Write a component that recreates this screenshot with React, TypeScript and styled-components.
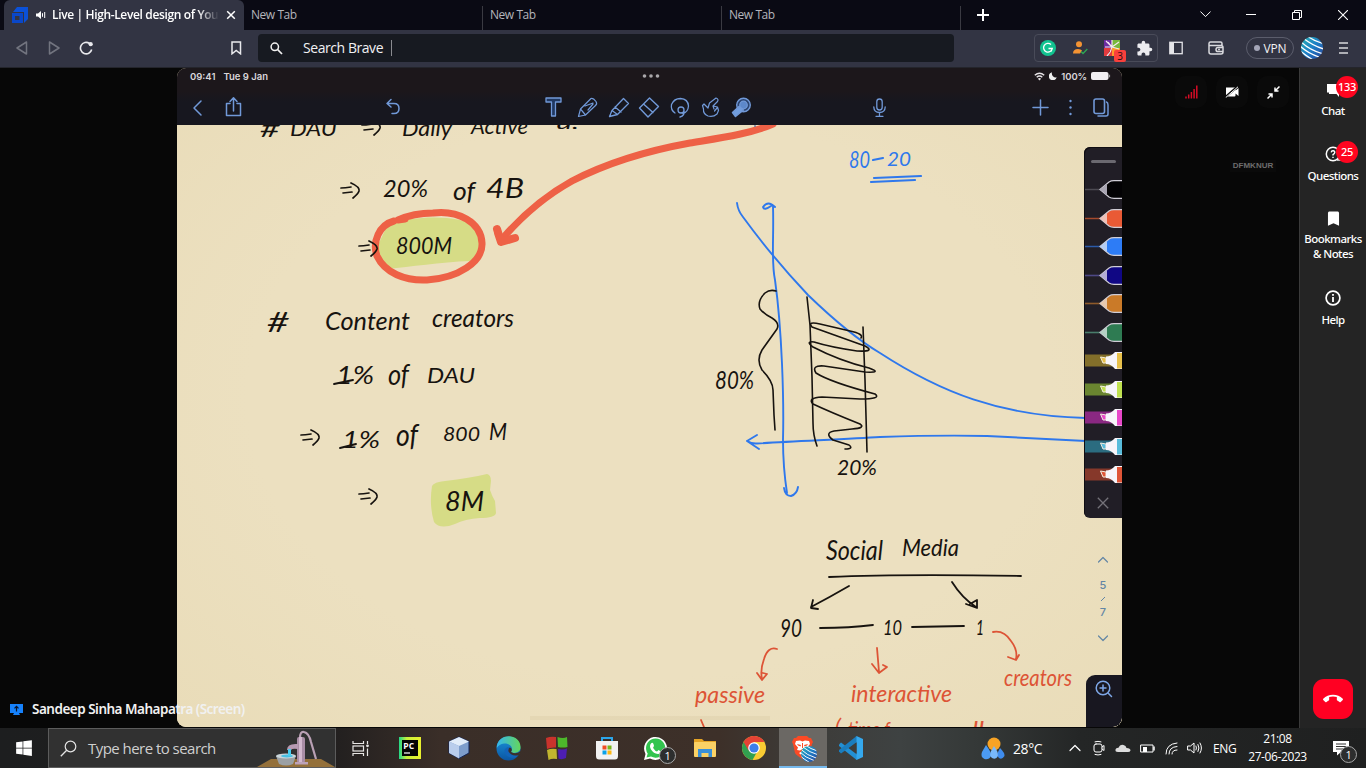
import React from 'react';
import styled, { createGlobalStyle } from 'styled-components';
import { FaWindows } from 'react-icons/fa';
import { MdExtension, MdCallEnd, MdBookmark } from 'react-icons/md';

const Global = createGlobalStyle`
  * { box-sizing: border-box; }
  html, body { margin: 0; padding: 0; background: #070707; overflow: hidden; }
  svg { display: block; flex: none; }
`;

const ui = '"Open Sans", "Noto Sans", sans-serif';

const Screen = styled.div`
  width: 1366px; height: 768px; display: flex; flex-direction: column;
  overflow: hidden; font-family: ${ui}; color: #fff; background: #070707;
`;

/* ---------- browser chrome ---------- */
const TabStrip = styled.div`
  height: 30px; flex: none; display: flex; align-items: stretch; background: #0a0a14; padding-left: 4px;
`;
const ActiveTab = styled.div`
  width: 240px; flex: none; display: flex; align-items: center; background: #323443;
  border-radius: 6px 6px 0 0; padding-left: 8px;
`;
const Favicon = styled.svg`width: 17px; height: 17px;`;
const Speaker = styled.svg`width: 10px; height: 10px; margin-left: 7px;`;
const CloseTab = styled.svg`width: 10px; height: 10px; margin-left: 6px;`;
const ActiveTitle = styled.span`
  flex: none; width: 168px; margin-left: 6px; overflow: hidden; white-space: nowrap; font-size: 12px; font-weight: 600;
  letter-spacing: -0.36px; line-height: 18px;
  mask-image: linear-gradient(90deg, #000 146px, transparent 167px);
`;
const IdleTab = styled.div<{ $w: number }>`
  width: ${p => p.$w}px; flex: none; padding-left: 7px; font-size: 12px; letter-spacing: -0.45px; line-height: 30px; color: #b4b5bb;
  border-right: 1px solid #3a3a42; border-image: linear-gradient(#0a0a14 7px, #3a3a42 7px) 1;
`;
const NewTabBtn = styled.div`width: 44px; display: flex; align-items: center; justify-content: center;`;
const WinButtons = styled.div`margin-left: auto; display: flex; align-items: center; height: 29px;`;
const WinBtn = styled.div`width: 46px; display: flex; justify-content: center;`;

const Toolbar = styled.div`
  height: 37px; flex: none; display: flex; align-items: center; background: #323443; padding-bottom: 1px;
`;
const NavIcons = styled.div`display: flex; align-items: center; width: 258px; padding-left: 15px; gap: 18px;`;
const BookmarkIcon = styled.svg`width: 11px; height: 14px; margin-left: 120px;`;
const Address = styled.div`
  width: 696px; height: 28px; flex: none; display: flex; align-items: center; background: #171a21; border-radius: 4px;
  padding-left: 12px; font-size: 14px; letter-spacing: -0.44px; color: #f1f1f3;
`;
const AddressText = styled.span`margin-left: 20px; padding-right: 8px; border-right: 1px solid #8a8b90; line-height: 16px;`;
const ExtGroup = styled.div`
  margin-left: 80px; width: 124px; height: 28px; border: 1px solid #494b59; border-radius: 4px; display: flex; align-items: center;
  padding-left: 5px; gap: 16px; flex: none;
`;
const RelBox = styled.div`position: relative; display: flex;`;
const ExtBadge = styled.span`
  position: absolute; left: 10px; top: 10px; width: 12px; height: 12px; border-radius: 2px; background: #f8403c; color: #2a0d10;
  font-size: 10px; line-height: 12px; text-align: center;
`;
const PanelIcon = styled.svg`width: 14px; height: 14px; margin-left: 11px;`;
const WalletIcon = styled.svg`width: 16px; height: 14px; margin-left: 25px;`;
const Vpn = styled.div`
  width: 48px; height: 22px; border: 1px solid #5b5d6c; border-radius: 11px; display: flex; align-items: center; justify-content: center;
  gap: 4px; font-size: 12px; letter-spacing: -0.2px; color: #f3f3f5; margin-left: 22px; margin-right: 7px;
`;
const MenuIcon = styled.svg`width: 10px; height: 12px; margin-left: 16px;`;
const Dot = styled.i`width: 6px; height: 6px; border-radius: 50%; background: #a4a6b8;`;

/* ---------- meeting ---------- */
const Meeting = styled.div`height: 661px; flex: none; display: flex; background: #070707; position: relative; border-top: 1px solid #24252c;`;
const Gutter = styled.div`width: 177px; flex: none;`;
const Board = styled.div`
  width: 945px; height: 659px; flex: none; display: flex; flex-direction: column; border-radius: 9px; overflow: hidden; background: #ebdfbd;
`;
const BoardHead = styled.div`
  height: 57px; flex: none; background: linear-gradient(#1c171b 0 40%, #17171f 60%); color: #ddd; display: flex; flex-direction: column;
`;
const StatusRow = styled.div`
  display: flex; align-items: center; height: 16px; padding: 0 11px 0 13px; font: 600 9.5px Inter, sans-serif; color: #d9d6da;
`;
const StatusLeft = styled.div`flex: 1; display: flex; gap: 8px;`;
const StatusRight = styled.div`flex: 1; display: flex; gap: 4px; align-items: center; justify-content: flex-end; letter-spacing: -0.1px;`;
const ToolRow = styled.div`flex: 1; padding: 11px 0 0;`;
const Paper = styled.div`
  flex: 1; position: relative;
  background: radial-gradient(ellipse at 50% 45%, #eee2c200 60%, #e3d4a955 100%), #ece0c0;
`;
const PenTray = styled.div`
  position: absolute; right: 0; top: 22px; width: 38px; height: 371px; border-radius: 6px 0 0 6px; background: #211e26;
  box-shadow: inset 1px 1px 0 #0f0d12; display: flex; flex-direction: column; align-items: flex-end; overflow: hidden;
`;
const Grip = styled.div`width: 25px; height: 3px; border-radius: 2px; background: #6b6970; margin: 13px 6px 12px 0;`;
const TrayClose = styled.div`flex: 1; width: 38px; display: flex; align-items: center; justify-content: center;`;
const Pager = styled.div`
  position: absolute; right: 9px; top: 430px; width: 20px; height: 88px; display: flex; flex-direction: column; align-items: center;
  justify-content: space-between; font: 500 11px/13px Inter, sans-serif; color: #6386a5;
`;
const PageNums = styled.div`display: flex; flex-direction: column; align-items: center;`;
const ZoomBox = styled.div`
  position: absolute; right: 0; bottom: 0; width: 36px; height: 52px; border-radius: 9px 0 9px 0; background: #181720;
  display: flex; justify-content: center; padding-top: 5px;
`;
const Presenter = styled.div`
  position: absolute; left: 10px; bottom: 9px; display: flex; align-items: center; gap: 9px; font: 600 13.5px/20px "Noto Sans", sans-serif;
  letter-spacing: -0.5px; color: #f1f1f1; white-space: nowrap;
`;
const SidePane = styled.div`flex: 1; display: flex; flex-direction: column; align-items: stretch; padding-top: 8px;`;
const RoundRow = styled.div`display: flex; justify-content: flex-end; gap: 9px; padding-right: 10px;`;
const RoundBtn = styled.div`width: 32px; height: 32px; border-radius: 10px; background: #0a0a0a; display: flex; align-items: center; justify-content: center;`;
const Code = styled.div`
  margin: 52px 0 0 108px; width: 46px; font: 700 8px/12px "Liberation Sans", sans-serif; color: #6d6d6d; text-align: center; background: #0a0a0a;
`;
const Rail = styled.div`
  width: 67px; flex: none; background: #242424; border-left: 1px solid #3a3a3a; display: flex; flex-direction: column; align-items: center;
`;
const RailItem = styled.div<{ $h: number; $top: number; $gap: number }>`
  height: ${p => p.$h}px; padding-top: ${p => p.$top}px; gap: ${p => p.$gap}px; flex: none; display: flex; flex-direction: column;
  align-items: center; position: relative; font: 500 11.5px/15px "Noto Sans", sans-serif; letter-spacing: -0.55px; text-align: center; white-space: pre-line;
`;
const Count = styled.span`
  position: absolute; top: 8px; left: 50%; margin-left: 3px; width: 22px; height: 22px; border-radius: 50%; background: #ff0520;
  font-size: 11px; line-height: 21px; text-align: center; letter-spacing: -0.3px;
`;
const EndCall = styled.div`
  margin-top: auto; margin-bottom: 9px; width: 40px; height: 40px; border-radius: 11px; background: #ff0022; display: flex; align-items: center; justify-content: center;
`;

/* ---------- taskbar ---------- */
const Taskbar = styled.div`
  height: 40px; flex: none; display: flex; align-items: stretch;
  background: linear-gradient(90deg, #1d1e1f 0, #211f1f 330px, #3a2e28 440px, #3d3029 720px, #3d3b38 800px, #3e4242 900px, #343837 980px, #242626 1080px, #1f2020 1366px);
`;
const Start = styled.div`width: 48px; display: flex; align-items: center; justify-content: center;`;
const SearchBox = styled.div`
  width: 288px; height: 40px; background: #313131; border: 1px solid #5c5c5c; display: flex; align-items: center; padding-left: 11px;
  font-size: 15px; letter-spacing: -0.54px; color: #cfcfcf; overflow: hidden;
`;
const SearchText = styled.span`margin-left: 11px; width: 170px;`;
const Apps = styled.div`display: flex;`;
const AppSlot = styled.div<{ $on?: boolean }>`
  width: ${p => (p.$on ? 48 : 49.2)}px; display: flex; align-items: center; justify-content: center; position: relative;
  background: ${p => (p.$on ? '#6b6864' : 'transparent')};
  border-bottom: ${p => (p.$on ? '2px solid #76b9ed' : '0')};
`;
const ProfileBadge = styled.div`position: absolute; left: 22px; top: 18px;`;
const Num = styled.span<{ $x: number; $y: number }>`
  position: absolute; left: ${p => p.$x}px; top: ${p => p.$y}px; width: 17px; height: 17px; border-radius: 50%; border: 1px solid #a7a7a7;
  background: #2d2e2e; font-size: 11px; line-height: 15px; text-align: center;
`;
const Tray = styled.div`margin-left: auto; display: flex; align-items: center; font-size: 12px; letter-spacing: -0.4px;`;
const Weather = styled.div`display: flex; align-items: center; gap: 7px; font-size: 14px; width: 87px;`;
const TrayIcons = styled.div`display: flex; align-items: center; gap: 8px;`;
const Lang = styled.span`margin-left: 10px; width: 26px;`;
const Clock = styled.div`width: 77px; text-align: center; line-height: 18px;`;
const Notif = styled.div`position: relative; width: 50px; display: flex; justify-content: center; height: 40px; align-items: center;`;

const line = { fill: 'none', stroke: 'currentColor', strokeLinecap: 'round', strokeLinejoin: 'round' } as const;

const Written = styled.text`font-family: Lato, "Noto Sans", sans-serif; font-style: italic; font-weight: 400;`;

type Word = [string, number, number, number, number, string?];
const INK = '#17130f';
const BLUE = '#2f78ec';
const RED = '#dd5436';
const words: Word[] = [
  ['#', 260, 137, 20, 24], ['DAU', 290, 136, 47, 22], ['Daily', 402, 136, 50, 22], ['Active', 471, 134, 57, 21], ['u.', 556, 129, 23, 18],
  ['20%', 383, 197, 45, 23], ['of', 453, 200, 22, 26], ['4B', 486, 198, 38, 27],
  ['800M', 396, 254, 56, 24],
  ['#', 267, 332, 22, 27], ['Content', 325, 330, 85, 26], ['creators', 432, 327, 82, 25],
  ['1%', 336, 384, 38, 25], ['of', 388, 385, 21, 29], ['DAU', 427, 383, 48, 22],
  ['1%', 342, 448, 38, 24], ['of', 396, 446, 22, 30], ['800', 443, 441, 37, 20], ['M', 489, 440, 18, 23],
  ['8M', 445, 511, 39, 27],
  ['80', 849, 168, 21, 24, BLUE], ['20', 887, 166, 24, 19, BLUE],
  ['80%', 715, 389, 39, 26], ['20%', 837, 475, 40, 22],
  ['Social', 826, 560, 57, 27], ['Media', 902, 556, 57, 24],
  ['90', 780, 637, 22, 25], ['10', 883, 635, 19, 21], ['1', 976, 635, 8, 21],
  ['passive', 695, 703, 70, 24, RED], ['interactive', 851, 702, 101, 23, RED], ['creators', 1004, 686, 68, 24, RED],
  ['(', 835, 734, 6, 22, RED], ['time f', 848, 737, 42, 22, RED], ['ll', 972, 737, 12, 22, RED],
];

const Implies = ({ x, y }: { x: number; y: number }) => (
  <path d={`M${x} ${y - 2} q4 0 10 -1 M${x + 2} ${y + 3} l9 -1 M${x + 10} ${y - 7} q9 4 8 8 q-1 3 -6 7`} {...line} stroke={INK} strokeWidth={1.7} />
);

const Notes = () => (
  <svg width="945" height="602" viewBox="177 125 945 602">
    <path d="M388 224 C420 214 462 216 475 226 L482 243 Q480 258 470 261 C440 262 410 267 388 269 Q378 262 378 245Z" fill="#d6dc86" />
    <path d="M432 486 Q434 482 445 481 Q470 478 487 474 Q491 475 491 481 L490 490 Q492 496 495 501 L496 513 Q495 518 480 518 Q465 519 455 524 Q440 530 434 522 Q429 505 432 486Z" fill="#d6dc86" />
    <path d="M530 718 H770" stroke="#ddcfaa" strokeWidth="4" opacity=".45" />
    <g {...line} stroke="#ee6146" strokeWidth="7">
      <path d="M394 221 C379 225 372 242 377 256 C385 273 405 281 427 280 C458 278 483 262 482 243 C481 222 458 210 433 213 C418 213 407 216 398 220 L405 219" />
      <path d="M773 124 C750 134 720 138 690 143 C640 152 605 164 572 181 C545 196 522 216 503 238" />
      <path d="M497 229 L501 242 L515 238 M498 233 L501 242" strokeWidth="8" />
    </g>
    <g {...line} stroke={BLUE} strokeWidth="1.9">
      <path d="M737 203 Q738 211 743 217 Q773 258 808 295 C838 324 858 340 880 353 C940 392 1000 416 1086 418" />
      <path d="M773 206 C774 240 771 262 775 280 C782 330 784 400 783 440 C783 465 785 480 787 493 M784 488 Q785 496 791 496 Q797 494 798 487 M775 207 Q768 200 763 207 Q764 211 771 206" />
      <path d="M747 441 Q752 444 757 443.500 C800 441 850 439 880 437 Q940 435 987 436 L1086 441 M757 435 L747 441 L759 449" />
      <path d="M871 182 L915 180 M874 178 L921 176 M873 160 L883 158" strokeWidth="2.2" />
    </g>
    <g {...line} stroke={INK} strokeWidth="1.6">
      <path d="M776 291 Q770 289 765 293 Q757 301 760 309 Q764 314 772 318 Q780 323 777 329 L762 350 Q756 360 762 370 Q773 381 773 390 L774 415 L775 430" />
      <path d="M807 297 L810 325 L812 377 L813 423 Q813 435 817 446 M863 327 L865 380 L867 452" />
      <path d="M861 338 Q864 334 850 331 L820 324 Q807 321 812 327 L865 346 Q876 352 857 351 Q830 347 814 342 Q805 341 813 347 Q840 361 869 368 Q883 373 865 372 L824 366 Q811 365 816 373 Q830 382 875 394 Q882 399 860 399 L822 397 Q807 398 813 404 Q830 412 860 424 Q866 428 852 429 L834 431 Q824 433 833 440 L849 445 Q854 449 845 449" />
      <path d="M829 577 Q900 574 1021 576 M849 586 Q830 597 811 607 M813 600 L811 608 L818 609 M952 582 Q962 598 976 607 M966 604 L977 608 L977 600 L970 604 M820 628 Q850 628 873 625 M912 627 L964 626" strokeWidth="1.8" />
      <path d="M334 384 L353 380 M340 448 L356 444" strokeWidth="1.900" />
    </g>
    <g {...line} stroke={RED} strokeWidth="1.8">
      <path d="M777 649 Q768 646 764 659 Q760 670 762 679 M757 673 L762 680 L767 674 L763 673 M877 648 L879 672 M872 664 L879 673 L887 667 L883 665 M993 632 Q1004 630 1011 641 Q1018 650 1016 659 M1008 657 L1016 660 L1019 655 M701 720 L704 727" />
    </g>
    <path d="M755 125 V127" stroke="#36529a" strokeWidth="1" />
    <Implies x={362} y={127} /><Implies x={341} y={190} /><Implies x={359} y={248} />
    <Implies x={301} y={437} /><Implies x={359} y={496} />
    {words.map(([t, x, y, w, size, color], i) => (
      <Written key={i} x={x} y={y} textLength={w} lengthAdjust="spacingAndGlyphs" fontSize={size} fill={color || INK}>{t}</Written>
    ))}
  </svg>
);

const Pen = ({ c, tip, ln }: { c: string; tip: string; ln: string }) => (
  <svg width="38" height="28.5" viewBox="0 0 38 28.5">
    <path d="M1 14.500H17" stroke={ln} strokeWidth="1.6" />
    <path d="M16 14.500 L25 7 Q27 5.700 30 5.700 H40 V23.300 H30 Q27 23.300 25 22Z" fill={c} stroke="#d0cdd6" strokeWidth="1.2" />
    <path d="M16 14.500 L23 8.700 V20.300Z" fill={tip} />
  </svg>
);
const Marker = ({ c, band }: { c: string; band: string }) => (
  <svg width="38" height="28.5" viewBox="0 0 38 28.5">
    <rect x="1" y="8.500" width="37" height="12" fill={band} />
    <path d="M16.500 11 L22 12 V17 H19 Z" fill={c} stroke="#f4eedf" strokeWidth="1" />
    <path d="M22 10.500 Q27 10.500 31 6 H38 V23 H31 Q27 18 22 18Z" fill="#f7f5fa" />
    <rect x="33" y="7" width="5" height="15.500" fill={c} />
  </svg>
);

const ToolsSvg = styled.svg`color: #7199d8;`;
const BoardTools = () => (
  <ToolsSvg width="945" height="30" viewBox="177 95 945 30">
    <g {...line} strokeWidth="1.5">
      <path d="M201 101 L194 108 L201 115" />
      <path d="M230 103.500 H226.500 V115.500 H240.500 V103.500 H237 M233.500 111 V98 M230 101.500 L233.500 97.700 L237 101.500" />
      <path d="M391 99.500 L387 103.500 L391 107 M387 103.500 H394 Q399 103.500 399 108.500 Q399 113.500 394 113.500 H392" />
      <path d="M546 98 H561 V102 H555.500 V116 H551.500 V102 H546Z" fill="#203861" strokeWidth="1.300" />
      <path d="M578.500 116.500 L580.500 109 L591 98.500 Q593 97.500 596 101.500 Q597.500 104 595.500 105.500 L585.500 115Z M580.500 109 L585.500 115 M585 106 L593 103 M588 110 L593 104" strokeWidth="1.200" />
      <path d="M609.500 116.500 L612 110.500 L623.500 98.500 L628.500 103.500 L617.500 114.500Z M612 110.500 L617.500 114.500 M615 107 L621 112" strokeWidth="1.300" />
      <path d="M639.500 108 L649.500 98 L658.500 106.500 L648 117Z M643.500 104 L653 112.500" strokeWidth="1.400" />
      <path d="M675 113 Q670.500 110 671.500 104.500 Q674 98.500 680.500 98.500 Q688 99 688.500 106 Q688 112 683 113.500 M684 110 A3 3 0 1 0 678 110 A3 3 0 1 0 684 110 Q685 116 680 117" strokeWidth="1.300" />
      <path d="M704 104 L708 108 L709.500 103 L716 98 Q719 99 717.500 101.500 L713 106 L717.500 107 L718.500 110.500 L717 114 Q713 117.500 708 116 Q703 114 703.500 109 L702.500 105.500Z M713 106 L714 109 M717 108 L714.500 111" strokeWidth="1.200" />
      <circle cx="743.500" cy="105" r="6.800" fill="#2b4470" strokeWidth="1.400" /><circle cx="743.500" cy="105" r="3.800" fill="#5d88ca" strokeWidth="1.200" />
      <path d="M732.500 112.500 L739 106.500 L743.500 110 L735.500 116.500Z" fill="#719dde" />
      <rect x="876.800" y="99" width="5.400" height="11" rx="2.700" strokeWidth="1.300" /><path d="M873.800 107 Q874 112.500 879.500 112.500 Q885 112.500 885.200 107 M879.500 112.500 V116 M876 116.300 H883" strokeWidth="1.300" />
      <path d="M1033 107.500 H1048 M1040.500 100 V115" />
      <rect x="1094" y="99" width="10.500" height="14.500" rx="2" strokeWidth="1.600" /><path d="M1106.500 102 Q1108 102.500 1108 105 V114 Q1108 116 1106 116 H1098" strokeWidth="1.500" />
    </g>
    <g fill="currentColor"><circle cx="1070.500" cy="101" r="1.200" /><circle cx="1070.500" cy="107.500" r="1.200" /><circle cx="1070.500" cy="114" r="1.200" /></g>
  </ToolsSvg>
);

const Globe = ({ s }: { s: number }) => (
  <svg width={s} height={s} viewBox="0 0 22 22">
    <defs>
      <linearGradient id="gl" x1="0" y1="0" x2="1" y2="1"><stop offset="0" stopColor="#29b3b3" /><stop offset=".5" stopColor="#1d7fc6" /><stop offset="1" stopColor="#2a449c" /></linearGradient>
      <clipPath id="gc"><circle cx="11" cy="11" r="11" /></clipPath>
    </defs>
    <circle cx="11" cy="11" r="11" fill="url(#gl)" />
    <g clipPath="url(#gc)" stroke="#fff" strokeWidth="1.300" fill="none">
      <path d="M6 -1 Q13 4 23 7 M2 1 Q12 9 23 12 M-1 4 Q8 13 22 17 M-2 8 Q6 16 18 20 M-2 13 Q4 18 12 23" />
    </g>
  </svg>
);

const Pump = () => (
  <svg width="78" height="38" viewBox="0 0 78 38">
    <path d="M0 38 L14 30 H64 L78 38Z" fill="#94703a" />
    <path d="M43 9 Q43 2 47 3 Q52 4 54 13 L59 30" fill="none" stroke="#b9a0b4" strokeWidth="2.200" />
    <rect x="40" y="8" width="8" height="26" rx="2" fill="#a98da5" /><rect x="42" y="8" width="3" height="26" fill="#d2b8cd" />
    <path d="M41 15 Q30 14 30 21 H34 Q35 19 41 20Z" fill="#b79ab2" /><path d="M38 33 H51 V35.500 H38Z" fill="#bda2b8" />
    <path d="M19 27 H39 L36 35 Q29 38 22 35Z" fill="#9ba0a4" /><ellipse cx="29" cy="27" rx="10" ry="2.500" fill="#c9d5db" /><ellipse cx="30" cy="27" rx="6" ry="1.500" fill="#49bfe2" />
    <rect x="31" y="20" width="3" height="7" fill="#47cdf0" />
  </svg>
);

const apps: React.ReactNode[] = [
  <svg width="17" height="17" viewBox="0 0 17 17" fill="none" stroke="#e8e6e4" strokeWidth="1.200"><path d="M1 1 V3.500 H11.500 V1 M1 16 V13.500 H11.500 V16" /><rect x="1" y="6" width="10.500" height="5" /><path d="M15.500 1 V4 M15.500 8.500 V16" /><circle cx="15.500" cy="5.800" r=".8" fill="#fff" /></svg>,
  <svg width="22" height="22" viewBox="0 0 22 22"><defs><linearGradient id="pc"><stop offset="0" stopColor="#21d789" /><stop offset=".35" stopColor="#c7f03a" /><stop offset="1" stopColor="#e9f02f" /></linearGradient></defs><rect width="22" height="22" fill="url(#pc)" /><rect x="3" y="3" width="16" height="16" fill="#050505" /><text x="4.300" y="11.500" fontSize="8.500" fontWeight="700" fill="#fff" fontFamily="Open Sans" letterSpacing="0">PC</text><path d="M5 16 H11" stroke="#fff" strokeWidth="1.200" /></svg>,
  <svg width="22" height="24" viewBox="0 0 22 24"><path d="M11 1 L21 5.500 V17 L11 22.500 L1 17 V5.500Z" fill="#7d9dcc" stroke="#122355" /><path d="M11 1 L21 5.500 L11 10 L1 5.500Z" fill="#e1ecf9" /><path d="M1 5.500 L11 10 V22.500 L1 17Z" fill="#b9cdec" /></svg>,
  <svg width="25" height="25" viewBox="0 0 25 25"><defs><linearGradient id="e1" x1="0" x2="1"><stop offset="0" stopColor="#34b5ef" /><stop offset="1" stopColor="#64d65b" /></linearGradient><linearGradient id="e2" y2="1" x2="0"><stop offset="0" stopColor="#1a94da" /><stop offset="1" stopColor="#0b55a3" /></linearGradient></defs><circle cx="12.500" cy="12.500" r="12" fill="url(#e2)" /><path d="M.8 10 C3 -3 24 -3 24.500 11 C25 17 18 18 15 16 C18 12 14 7 8 7.500 Q3 8 .8 12Z" fill="url(#e1)" /><path d="M12 11 C5 13 9 23 19 21.500 Q22 20 23.500 17 Q17 20 14.500 16 Q13 14 14 12Z" fill="#1264ba" /><path d="M15 16 Q20 19 24.800 15 L23 19 Q16 21 12.500 15.500Q12 12 14 11.500Q17 13 15 16" fill="#3c302a" /></svg>,
  <svg width="22" height="24" viewBox="0 0 22 24"><path d="M0 2 Q5 0 10 1 V11.500 Q5 11 1 13Z" fill="#c9332c" /><path d="M11.500 1 Q17 3 21 1 L21.500 11 Q17 12 12 11Z" fill="#4db72b" /><path d="M1 14 Q5 12 10.500 13 L11 23 Q6 22 2.500 24Z" fill="#c1b52f" /><path d="M12 13 Q17 14 21 12.500 L20 22 Q16 24 12.500 22.500Z" fill="#4d1eb1" /></svg>,
  <svg width="24" height="24" viewBox="0 0 24 24"><path d="M7 6 V2 H17 V6" fill="none" stroke="#2ba6ea" strokeWidth="2" /><path d="M1 5 H23 V20 Q23 23.500 20 23.500 H4 Q1 23.500 1 20Z" fill="#f2f2f2" /><path d="M7.500 9.500h4v4h-4z" fill="#ef4c25" /><path d="M12.500 9.500h4v4h-4z" fill="#78b61c" /><path d="M7.500 14.500h4v4h-4z" fill="#0ba2e8" /><path d="M12.500 14.500h4v4h-4z" fill="#fcb713" /></svg>,
  <><svg width="25" height="25" viewBox="0 0 25 25"><path d="M1 24 L2.500 18 A11.500 11.500 0 1 1 7 22.500Z" fill="#fff" /><path d="M3.500 21.500 L4.700 17.500 A9.600 9.600 0 1 1 8 20.500Z" fill="#32c44f" /><path d="M8 7.500 Q9.500 6 10.500 8 L11 10 Q9.500 11.500 10.500 12.500 Q12 15 14 15.500 L15.500 14 L18 15.500 Q18 18 15 18 Q10.500 17.500 8 13.500 Q6 10 8 7.500Z" fill="#fff" /></svg><Num $x={28} $y={19}>1</Num></>,
  <svg width="22" height="20" viewBox="0 0 22 20"><path d="M0 1 H8 L10 3 H22 V18 H0Z" fill="#e5a425" /><rect y="4" width="22" height="15" rx="1" fill="#fad165" /><path d="M4 19 V11 H18 V19 H14.500 V15 H7.500 V19Z" fill="#3990d8" /></svg>,
  <svg width="24" height="24" viewBox="0 0 24 24"><circle cx="12" cy="12" r="12" fill="#f9cb33" /><path d="M12 12 L1.600 6 A12 12 0 0 0 10.500 23.900 L15.500 15Z" fill="#31a050" /><path d="M1.600 6 A12 12 0 0 1 22.400 6 H12 L6.500 14.500Z" fill="#e54335" /><circle cx="12" cy="12" r="5.800" fill="#fff" /><circle cx="12" cy="12" r="4.600" fill="#3d7eea" /></svg>,
];

const Lion = () => (
  <svg width="21" height="24" viewBox="0 0 21 24">
    <path d="M6 1 H15 L17 3 L19 3 L21 7 L20 9 L18 18 Q17 20 10.500 24 Q4 20 3 18 L1 9 L0 7 L2 3 H4Z" fill="#fb4a25" />
    <path d="M4 6 L8 5.500 L10.500 6.500 L13 5.500 L17 6 L18 9 L15 12.500 L16 15 L13 15.500 L10.500 14 L8 15.500 L5 15 L6 12.500 L3 9Z M7 18 L10.500 16 L14 18 L10.500 21Z" fill="#fff" />
    <path d="M5 9 L9 10 L8.500 11.500 L6 10.500Z M16 9 L12 10 L12.500 11.500 L15 10.500Z M10 8 H11 V13 H10Z" fill="#fb4a25" />
  </svg>
);

const VSCode = () => (
  <svg width="24" height="24" viewBox="0 0 24 24">
    <path d="M0 8.500 L2 6.500 L18 18.500 V24 L17 23.500 L0 10Z" fill="#2390d4" />
    <path d="M0 15.500 L2 17.500 L18 6 V0 L17 .5 L0 14Z" fill="#1a7dbe" />
    <path d="M17.500 0 L24 3 V21 L17.500 24Z" fill="#35a8ed" />
    <path d="M17.500 6.500 L10.300 12 L17.500 17.500Z" fill="#3c3d3b" />
  </svg>
);

export default function App() {
  return (
    <Screen>
      <Global />
      <TabStrip>
        <ActiveTab>
          <Favicon viewBox="0 0 17 17"><path d="M5 0 H16 V12 L12 16 V5 H1Z" fill="#0b51d8" /><path d="M0 6 H11 V16 H0Z M3 9 V13 H7.500 V9Z" fill="#0a47c9" fillRule="evenodd" /></Favicon>
          <Speaker viewBox="0 0 10 10"><path d="M0 3.500 H2 L5 1 V9 L2 6.500 H0Z" fill="#fff" /><path d="M6.500 3.200 V6.800 M8.700 2 V8" stroke="#fff" strokeWidth="1" /></Speaker>
          <ActiveTitle>Live | High-Level design of YouTube</ActiveTitle>
          <CloseTab viewBox="0 0 10 10"><path d="M1.200 1.200 L8.800 8.800 M8.800 1.200 L1.200 8.800" stroke="#fff" strokeWidth="1.500" /></CloseTab>
        </ActiveTab>
        <IdleTab $w={239}>New Tab</IdleTab>
        <IdleTab $w={239}>New Tab</IdleTab>
        <IdleTab $w={239}>New Tab</IdleTab>
        <NewTabBtn><svg width="12" height="12" viewBox="0 0 12 12"><path d="M6 0 V12 M0 6 H12" stroke="#fff" strokeWidth="2" /></svg></NewTabBtn>
        <WinButtons>
          <WinBtn><svg width="11" height="7" viewBox="0 0 11 7"><path d="M.7 .8 L5.500 5.600 L10.300 .8" {...line} strokeWidth="1" /></svg></WinBtn>
          <WinBtn><svg width="10" height="1"><rect width="10" height="1" fill="#fff" /></svg></WinBtn>
          <WinBtn><svg width="10" height="10" viewBox="0 0 10 10" fill="none" stroke="#fff"><path d="M.5 2.500 H7.500 V9.500 H.5Z M2.500 2.500 V.5 H9.500 V7.500 H7.500" /></svg></WinBtn>
          <WinBtn><svg width="10" height="10" viewBox="0 0 10 10"><path d="M0 0 L10 10 M10 0 L0 10" stroke="#fff" strokeWidth="1.100" /></svg></WinBtn>
        </WinButtons>
      </TabStrip>
      <Toolbar>
        <NavIcons>
          <svg width="14" height="14" viewBox="0 0 14 14"><path d="M11.500 1 V13 L2 7Z" fill="none" stroke="#72747f" strokeWidth="1.500" strokeLinejoin="round" /></svg>
          <svg width="14" height="14" viewBox="0 0 14 14"><path d="M2.500 1 V13 L12 7Z" fill="none" stroke="#72747f" strokeWidth="1.500" strokeLinejoin="round" /></svg>
          <svg width="14" height="14" viewBox="0 0 14 14"><path d="M10.500 2.500 A5.700 5.700 0 1 0 12.700 8.500" fill="none" stroke="#e9e9ed" strokeWidth="1.600" /><circle cx="11.700" cy="3.200" r="2.100" fill="#e9e9ed" /></svg>
          <BookmarkIcon viewBox="0 0 11 14"><path d="M1 1 H9.500 V12.800 L5.200 9.500 L1 12.800Z" fill="none" stroke="#e9e9ed" strokeWidth="1.500" /></BookmarkIcon>
        </NavIcons>
        <Address>
          <svg width="13" height="13" viewBox="0 0 13 13"><circle cx="4.800" cy="4.800" r="3.700" fill="none" stroke="#f1f1f1" strokeWidth="1.500" /><path d="M7.700 7.700 L12 12" stroke="#f1f1f1" strokeWidth="1.700" /></svg>
          <AddressText>Search Brave</AddressText>
        </Address>
        <ExtGroup>
          <svg width="16" height="16" viewBox="0 0 16 16"><circle cx="8" cy="8" r="8" fill="#12c390" /><path d="M11 4.500 A4.400 4.400 0 1 0 12.300 8.500 H8.500 M12.300 8.500 L11 11.500" fill="none" stroke="#fff" strokeWidth="1.300" /></svg>
          <svg width="16" height="16" viewBox="0 0 16 16"><circle cx="7" cy="4.300" r="3" fill="#f49333" /><path d="M1 13.500 Q1 9 6 9 Q9 9 10 10.500 L8 13.500Z" fill="#f49333" /><path d="M9 11.500 L11 13.500 L15.300 9" fill="none" stroke="#2fa653" strokeWidth="1.300" /></svg>
          <RelBox>
            <svg width="16" height="16" viewBox="0 0 16 16"><path d="M0 0h8v8H0z" fill="#6c2ca1" /><path d="M8 0h8v8H8z" fill="#78b83b" /><path d="M0 8h8v8H0z" fill="#e23a3e" /><path d="M8 8h8v8H8z" fill="#fb9a2a" /><path d="M8 7 L2 1 M8 7 L8 0 M8 7 L15 2 M8 7 L1 7 M8 7 L15 9 M8 7 Q7 12 3 16 M8 7 L4 2" stroke="#f3e9ef" strokeWidth="1.200" /></svg>
            <ExtBadge>3</ExtBadge>
          </RelBox>
          <MdExtension size={17} color="#ececf0" />
        </ExtGroup>
        <PanelIcon viewBox="0 0 14 14"><rect x=".8" y="1.300" width="12.400" height="11.400" fill="none" stroke="#e6e6ea" strokeWidth="1.300" /><rect x="1" y="1.300" width="4" height="11.400" fill="#e6e6ea" /></PanelIcon>
        <WalletIcon viewBox="0 0 16 14"><path d="M14 4.500 V2.500 Q14 1 12.500 1 H2.500 Q1 1 1 2.500 V11 Q1 13 3 13 H13 Q15 13 15 11 V6.500 Q15 4.500 13 4.500 H1.500 M15 6.500 H10 Q8 6.500 8 8.700 Q8 10.500 10 10.500 H15" {...line} stroke="#d9d9de" strokeWidth="1.500" /><circle cx="11" cy="8.500" r="1" fill="#d9d9dd" /></WalletIcon>
        <Vpn><Dot />VPN</Vpn>
        <Globe s={22} />
        <MenuIcon viewBox="0 0 10 12"><path d="M0 1 H9 M0 6 H9 M0 11 H9" stroke="#d8d8dc" strokeWidth="1.500" /></MenuIcon>
      </Toolbar>

      <Meeting>
        <Gutter />
        <Board>
          <BoardHead>
            <StatusRow>
              <StatusLeft><span>09:41</span><span>Tue 9 Jan</span></StatusLeft>
              <svg width="18" height="4"><circle cx="2.500" cy="2" r="1.800" fill="#a9a7aa" /><circle cx="9" cy="2" r="1.800" fill="#a9a7aa" /><circle cx="15.500" cy="2" r="1.800" fill="#a9a7aa" /></svg>
              <StatusRight>
                <svg width="11" height="9" viewBox="0 0 11 9"><path d="M.8 3.300 Q5.500 -1 10.200 3.300 M2.700 5.300 Q5.500 2.800 8.300 5.300" fill="none" stroke="#e6e3e6" strokeWidth="1.400" /><path d="M3.900 6.700 Q5.500 5.300 7.100 6.700 L5.500 8.500Z" fill="#e6e3e6" /></svg>
                <svg width="8" height="8" viewBox="0 0 8 8"><path d="M3 .3 A4 4 0 1 0 7.700 5.300 A4 4 0 0 1 3 .3Z" fill="#eee" /></svg>
                <span>100%</span>
                <svg width="20" height="8" viewBox="0 0 20 8"><rect width="17.500" height="8" rx="2" fill="#f1eef1" /><path d="M18.600 2.700 V5.300" stroke="#aaa" /></svg>
              </StatusRight>
            </StatusRow>
            <ToolRow><BoardTools /></ToolRow>
          </BoardHead>
          <Paper>
            <Notes />
            <PenTray>
              <Grip />
              <Pen c="#030204" tip="#a9a5b2" ln="#4c4a52" />
              <Pen c="#e95a35" tip="#efc1b8" ln="#a54a2c" />
              <Pen c="#2d7cf6" tip="#b5cdf4" ln="#2b5aa8" />
              <Pen c="#100784" tip="#b4add6" ln="#4d4886" />
              <Pen c="#ca7a28" tip="#e7c9b0" ln="#8f5a2a" />
              <Pen c="#2e7b52" tip="#b6d1c5" ln="#497d6b" />
              <Marker c="#e7c04a" band="#836f2a" />
              <Marker c="#bfe14f" band="#6a8530" />
              <Marker c="#e847c9" band="#8a2882" />
              <Marker c="#58bcdb" band="#2b6c80" />
              <Marker c="#df5537" band="#86382a" />
              <TrayClose><svg width="12" height="12" viewBox="0 0 12 12"><path d="M.8 .8 L11.200 11.200 M11.200 .8 L.8 11.200" stroke="#747279" strokeWidth="1.300" /></svg></TrayClose>
            </PenTray>
            <Pager>
              <svg width="12" height="8" viewBox="0 0 12 8"><path d="M1.500 7 L6 2.500 L10.500 7" {...line} strokeWidth="1.200" /></svg>
              <PageNums>
                <span>5</span>
                <svg width="8" height="14" viewBox="0 0 8 14"><path d="M2 9 L6 5" stroke="currentColor" /></svg>
                <span>7</span>
              </PageNums>
              <svg width="12" height="8" viewBox="0 0 12 8"><path d="M1.500 1 L6 5.500 L10.500 1" {...line} strokeWidth="1.200" /></svg>
            </Pager>
            <ZoomBox><svg width="18" height="18" viewBox="0 0 18 18" color="#7da6e6"><circle cx="8" cy="8" r="6.800" {...line} strokeWidth="1.500" /><path d="M13 13 L16.500 16.500 M8 5 V11 M5 8 H11" {...line} strokeWidth="1.500" /></svg></ZoomBox>
          </Paper>
        </Board>
        <SidePane>
          <RoundRow>
            <RoundBtn><svg width="13" height="14" viewBox="0 0 13 14"><path d="M1 13.500 V11.500 M3.700 13.500 V9.500 M6.400 13.500 V7 M9.100 13.500 V4 M11.800 13.500 V.5" stroke="#d80c26" strokeWidth="1.500" /></svg></RoundBtn>
            <RoundBtn><svg width="14" height="12" viewBox="0 0 14 12"><path d="M1 1.500 H9.500 Q10.500 1.500 10.500 2.500 V4.500 L13.500 2 V10 L10.500 7.500 V9.500 Q10.500 10.500 9.500 10.500 H1Z" fill="#fff" /><path d="M0 11.500 L12.500 .5" stroke="#0a0a0a" strokeWidth="2.200" /><path d="M.8 11.500 L13 .8" stroke="#fff" strokeWidth="1" /></svg></RoundBtn>
            <RoundBtn><svg width="13" height="13" viewBox="0 0 13 13"><path d="M12.500 .5 L8 5 M8 1.500 V5 H11.500 M.5 12.500 L5 8 M1.500 8 H5 V11.500" fill="none" stroke="#fff" strokeWidth="1.500" /></svg></RoundBtn>
          </RoundRow>
          <Code>DFMKNUR</Code>
        </SidePane>
        <Rail>
          <RailItem $h={65} $top={15} $gap={5}>
            <svg width="14" height="15" viewBox="0 0 14 15"><path d="M1 1 H11 Q13 1 13 3 V14 L10.500 11 H3 V9.500 H1Z" fill="#fff" /></svg>
            <Count>133</Count><span>Chat</span>
          </RailItem>
          <RailItem $h={65} $top={13} $gap={5}>
            <svg width="17" height="17" viewBox="0 0 17 17"><circle cx="8" cy="8" r="6.700" fill="none" stroke="#fff" strokeWidth="1.500" /><path d="M6.200 6.300 Q6.500 4.500 8.200 4.700 Q10 5 9.700 6.600 Q9.500 7.500 8 8.600 V9.600 M8 10.700 V12" fill="none" stroke="#fff" strokeWidth="1.400" /><path d="M12 14 H16.500" stroke="#fff" strokeWidth="1.400" /></svg>
            <Count>25</Count><span>Questions</span>
          </RailItem>
          <RailItem $h={79} $top={11} $gap={3}>
            <MdBookmark size={19} /><span>{'Bookmarks\n& Notes'}</span>
          </RailItem>
          <RailItem $h={60} $top={13} $gap={6}>
            <svg width="16" height="16" viewBox="0 0 16 16"><circle cx="8" cy="8" r="6.900" fill="none" stroke="#fff" strokeWidth="1.700" /><path d="M8 7 V12 M8 4 V5.700" stroke="#fff" strokeWidth="1.800" /></svg>
            <span>Help</span>
          </RailItem>
          <EndCall><MdCallEnd size={20} /></EndCall>
        </Rail>
        <Presenter>
          <svg width="13" height="11" viewBox="0 0 13 11"><path d="M0 0 H13 V9 H9 L10 11 H3 L4 9 H0Z" fill="#1681fb" /><path d="M6.500 7.500 V2.500 M4.500 4.300 L6.500 2.300 L8.500 4.300" fill="none" stroke="#08142c" strokeWidth="1.200" /></svg>
          Sandeep Sinha Mahapatra (Screen)
        </Presenter>
      </Meeting>

      <Taskbar>
        <Start><FaWindows size={18} color="#fff" /></Start>
        <SearchBox>
          <svg width="17" height="17" viewBox="0 0 17 17"><circle cx="10.500" cy="6.500" r="5.300" fill="none" stroke="#e3e3e3" strokeWidth="1.200" /><path d="M6.700 10.300 L.8 16.200" stroke="#e3e3e3" strokeWidth="1.300" /></svg>
          <SearchText>Type here to search</SearchText>
          <Pump />
        </SearchBox>
        <Apps>
          {apps.map((a, i) => <AppSlot key={i}>{a}</AppSlot>)}
          <AppSlot $on>
            <Lion />
            <ProfileBadge><Globe s={16} /></ProfileBadge>
          </AppSlot>
          <AppSlot><VSCode /></AppSlot>
        </Apps>
        <Tray>
          <Weather>
            <svg width="26" height="25" viewBox="0 0 26 25"><circle cx="14" cy="8" r="6.500" fill="#f7a325" /><path d="M6 9 Q12 17 11 20 Q9 24 4.500 23 Q0 21 2 16Z" fill="#4b9bf3" /><path d="M14 10 Q19 17 18 20 Q16 24 12 22 Q9 20 11 15Z" fill="#79b9fa" /><path d="M20 12 Q25 17 24.500 20 Q22 24 19 22 Q17 20 18 16Z" fill="#3f8cec" /></svg>
            28°C
          </Weather>
          <TrayIcons>
            <svg width="16" height="16" viewBox="0 0 16 16"><path d="M3 10.500 L8 5.500 L13 10.500" {...line} strokeWidth="1.200" /></svg>
            <svg width="16" height="16" viewBox="0 0 16 16"><rect x="3" y="4" width="8" height="8" rx="2" {...line} /><path d="M11 7 L13 5.500 V10.500 L11 9 M4 1.800 Q7 .8 10 1.800 M4 14.500 Q7 15.500 10 14.500" {...line} /></svg>
            <svg width="16" height="16" viewBox="0 0 16 16"><path d="M3 12 Q0 12 .5 9.500 Q1 7.500 3.500 7.700 Q5 4 8.500 5 Q11 5.500 11.500 8 Q15.500 8 15.500 10.500 Q15 12 13 12Z" fill="#dcdcdc" /></svg>
            <svg width="16" height="16" viewBox="0 0 16 16"><rect x="2" y="5" width="12" height="7" {...line} /><path d="M15 7 V10" {...line} strokeWidth="1.500" /><path d="M4 7 H8 V12 H4Z" fill="#fff" /></svg>
            <svg width="16" height="16" viewBox="0 0 16 16"><path d="M3 14 Q3 4 14 3 M6 14 Q6 7 14 6.500 M9 14 Q9 10 14 10" {...line} /></svg>
            <svg width="16" height="16" viewBox="0 0 16 16"><path d="M1 6 H3.500 L7 3 V13 L3.500 10 H1Z M9 6 Q10 8 9 10 M11 4.500 Q13 8 11 11.500 M13 3 Q16 8 13 13" {...line} /></svg>
          </TrayIcons>
          <Lang>ENG</Lang>
          <Clock>21:08<br />27-06-2023</Clock>
          <Notif>
            <svg width="16" height="16" viewBox="0 0 16 16"><path d="M0 1 H16 V12 H8 L4 15.500 V12 H0Z" fill="#fff" /><path d="M3 4 H13 M3 6.500 H13 M3 9 H10" stroke="#333" /></svg>
            <Num $x={24} $y={18}>1</Num>
          </Notif>
        </Tray>
      </Taskbar>
    </Screen>
  );
}
